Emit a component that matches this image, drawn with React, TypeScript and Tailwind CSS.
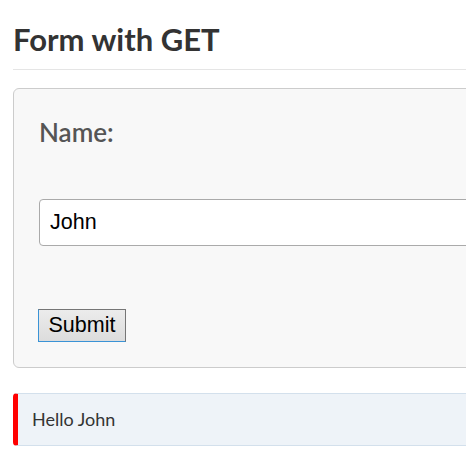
export default function App() {
  return (
    <div className="h-[451px] w-[466px] overflow-hidden bg-white font-['Lato',sans-serif] text-[#333]">
      <div className="w-[700px] px-[13px] pt-[21px]">
        <h1 className="border-b border-[#e5e5e5] pb-[11px] text-[31px] font-bold leading-[37px] text-[#333]">
          Form with GET
        </h1>
        <form className="mt-[18px] rounded-[6px] border border-[#cccccc] bg-[#f8f8f8] pb-[25px] pl-[25px] pt-[28px]">
          <label className="block text-[26px] font-semibold leading-[31px] text-[#555]">Name:</label>
          <input
            type="text"
            defaultValue="John"
            className="mt-[51px] block h-[47px] w-[600px] rounded-[4px] border border-[#aaaaaa] bg-white px-[10px] font-['Liberation_Sans',Arial,sans-serif] text-[21.5px] text-black outline-none"
          />
          <button
            type="button"
            className="mt-[63px] block h-[33px] w-[88px] -ml-px border border-t-[#767676] border-r-[#767676] border-b-[#3a93d6] border-l-[#3a93d6] bg-gradient-to-b from-[#ececec] to-[#dcdcdc] font-['Liberation_Sans',Arial,sans-serif] text-[21.5px] leading-none text-black"
          >
            Submit
          </button>
        </form>
        <div className="mt-[25px] flex h-[53px] items-center rounded-[4px] border border-l-[5px] border-[#d3e0ec] border-l-[#ff0000] bg-[#eef3f8] pl-[14px] text-[18px] text-[#333]">
          Hello John
        </div>
      </div>
    </div>
  )
}
